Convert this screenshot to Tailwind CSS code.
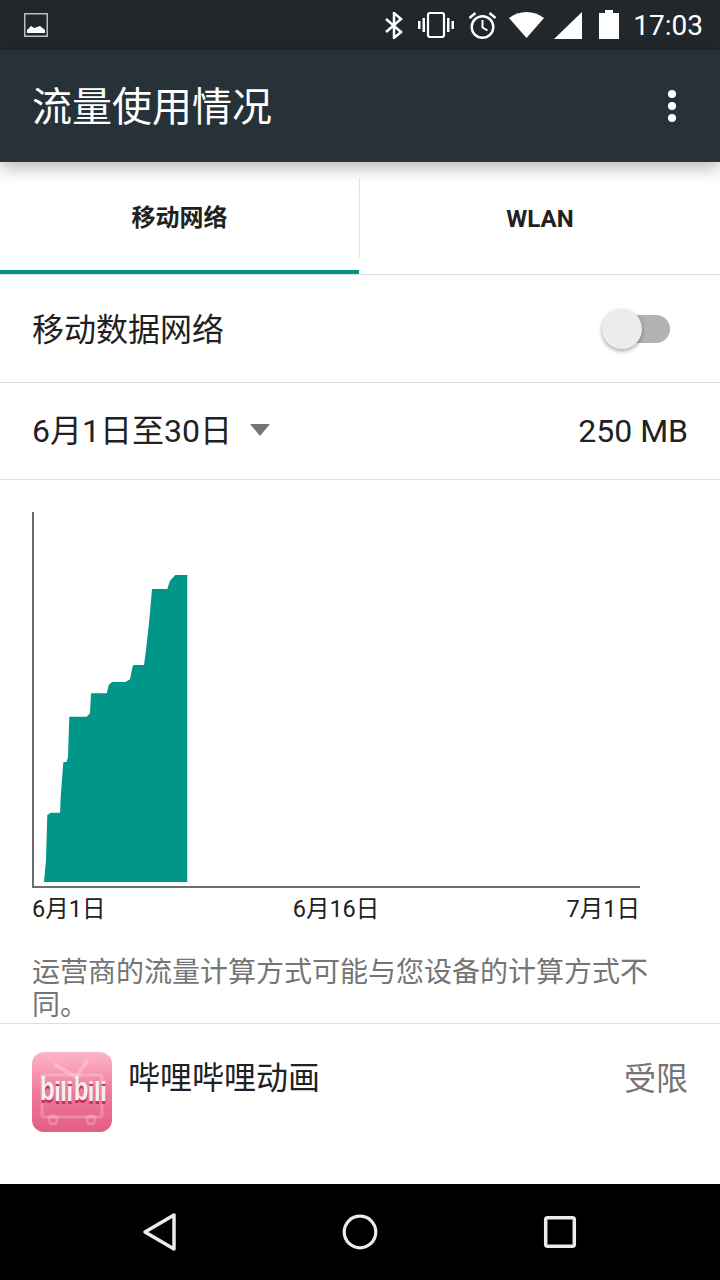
<!DOCTYPE html>
<html lang="zh-CN">
<head>
<meta charset="utf-8">
<script src="https://cdn.jsdelivr.net/npm/@tailwindcss/browser@4"></script>
</head>
<body class="m-0">
<div class="w-[720px] h-[1280px] flex flex-col bg-white overflow-hidden font-['Roboto','Noto_Sans_CJK_SC',sans-serif] text-[#212121]">
  <!-- status bar -->
  <div class="h-[50px] shrink-0 bg-[#21272b] flex items-center justify-between pl-6 pr-[17px] text-white">
    <svg width="24" height="24" viewBox="0 0 24 24" class="-mt-[1px]"><rect x="0.750" y="0.750" width="22.500" height="22.500" fill="none" stroke="#bdbdbd" stroke-width="1.500"/><path d="M3 20v-3l4-4 3 2 3-1 3-1 5 4v3z" fill="#fff"/></svg>
    <div class="flex items-center">
      <svg width="18" height="27" viewBox="0 0 18 27" class="mr-[15px]"><path d="M1 7l15 13-7 6V1l7 6L1 20" fill="none" stroke="#fff" stroke-width="2.500"/></svg>
      <svg width="36" height="26" viewBox="0 0 36 26" class="mr-[14px]"><rect x="10" y="1" width="16" height="24" rx="2" fill="none" stroke="#fff" stroke-width="2.200"/><path d="M0 9h2.500v8H0zM4.500 6H7v14H4.500zM29 6h2.500v14H29zM33.500 9H36v8h-2.500z" fill="#fff"/></svg>
      <svg width="29" height="28" viewBox="0 0 29 28" class="mr-[12px]"><circle cx="14.500" cy="16" r="10.800" fill="none" stroke="#fff" stroke-width="2.400"/><path d="M14.500 9v7.500l5 3" fill="none" stroke="#fff" stroke-width="2"/><path d="M1.500 7l6-5M27.500 7l-6-5" stroke="#fff" stroke-width="2.400"/></svg>
      <svg width="35" height="26" viewBox="0 0 35 26" class="mr-[10px]"><path d="M17.500 26L0 6C10 -2 25 -2 35 6z" fill="#fff"/></svg>
      <svg width="28" height="27" viewBox="0 0 28 27" class="mr-[17px]"><path d="M0 27L28 0v27z" fill="#fff"/></svg>
      <svg width="20" height="29" viewBox="0 0 20 29" class="mr-[14px] -mt-[2px]"><path d="M0 3h6V0h8v3h6v26H0z" fill="#fff"/></svg>
      <span class="text-[28px] leading-none text-white mt-[2px]">17:03</span>
    </div>
  </div>
  <!-- app bar -->
  <div class="h-[112px] shrink-0 bg-[#263238] flex items-center justify-between pl-[32px] pr-[44px] relative shadow-[0_6px_16px_rgba(0,0,0,0.28)]">
    <span class="text-[40px] leading-none text-white mt-[4px]">流量使用情况</span>
    <div class="flex flex-col gap-[4px]">
      <span class="block size-[8px] rounded-full bg-white"></span>
      <span class="block size-[8px] rounded-full bg-white"></span>
      <span class="block size-[8px] rounded-full bg-white"></span>
    </div>
  </div>
  <!-- tabs -->
  <div class="h-[113px] shrink-0 flex border-b border-[#dedede]">
    <div class="w-[359px] h-[112px] flex items-center justify-center border-b-4 border-[#009688] text-[24px] font-bold pt-[4px] shrink-0">移动网络</div>
    <div class="w-[1px] h-[80px] mt-[16px] bg-[#e5e5e5] shrink-0"></div>
    <div class="flex-1 flex items-center justify-center text-[24px] font-bold pt-[1px]">WLAN</div>
  </div>
  <!-- toggle row -->
  <div class="h-[108px] shrink-0 flex items-center justify-between pl-[32px] pr-[50px] border-b border-[#dedede]">
    <span class="text-[32px] leading-none mt-[2px]">移动数据网络</span>
    <div class="relative w-[68px] h-[28px]">
      <div class="absolute right-0 top-0 w-[56px] h-[28px] rounded-full bg-[#b2b2b2]"></div>
      <div class="absolute left-0 -top-[6px] size-[40px] rounded-full bg-[#ececec] shadow-[0_2px_4px_rgba(0,0,0,0.35)]"></div>
    </div>
  </div>
  <!-- cycle row -->
  <div class="h-[97px] shrink-0 flex items-center justify-between pl-[32px] pr-[32px] border-b border-[#dedede]">
    <div class="flex items-center">
      <span class="text-[32px] leading-none">6月1日至30日</span>
      <svg width="20" height="12" viewBox="0 0 20 12" class="ml-[18px] -mt-[2px]"><path d="M0 0h20L10 12z" fill="#757575"/></svg>
    </div>
    <span class="text-[32px] leading-none">250 MB</span>
  </div>
  <!-- chart -->
  <div class="h-[476px] shrink-0 pl-[32px] pt-[32px] flex flex-col">
    <div class="w-[608px] h-[376px] shrink-0 border-l-2 border-b-2 border-[#6c6e70] relative">
      <svg width="608" height="376" viewBox="32 512 608 376" class="absolute -left-[2px] top-0">
        <path d="M44 882 46 860 47.300 815 50.700 812.700H60L60.700 796.700 63.300 762.300 66.700 761.700 68 757 69.300 716.700H86.700L90 713.300 91 693.300H106.700L108.700 685 112 682H125.300L130 679.300 132.700 666 134 665H144L146 650 149.300 620 152 589H167.300L170 580.700 175.300 575H187.300V882Z" fill="#009688"/>
      </svg>
    </div>
    <div class="flex justify-between w-[608px] text-[23.500px] leading-none mt-[10px]">
      <span>6月1日</span><span>6月16日</span><span>7月1日</span>
    </div>
  </div>
  <!-- note -->
  <div class="h-[67px] shrink-0 pl-[32px] pr-[64px] text-[28px] leading-[33px] text-[#757575] overflow-hidden">运营商的流量计算方式可能与您设备的计算方式不同。</div>
  <!-- app row -->
  <div class="border-t border-[#dedede] flex-1 flex items-start justify-between pl-[32px] pr-[32px] pt-[28px]">
    <div class="flex items-start">
      <div class="w-[80px] h-[80px] rounded-[12px] bg-gradient-to-b from-[#fcb6c8] via-[#f0799b] to-[#e35e84] relative overflow-hidden">
        <svg width="80" height="80" viewBox="0 0 80 80" class="absolute inset-0"><g fill="none" stroke="#fff" stroke-opacity="0.22" stroke-width="3"><rect x="10" y="23" width="60" height="42" rx="2"/><circle cx="21" cy="68" r="4"/><circle cx="59" cy="68" r="4"/></g><path d="M22 12l22 13M56 8 44 25" stroke="#fff" stroke-opacity="0.25" stroke-width="4"/></svg>
        <div class="absolute left-[8px] top-[22px] h-[32px] flex items-end font-['Liberation_Sans',sans-serif] font-bold text-[#f1f1f3] leading-none tracking-[-0.5px] [text-shadow:0_2px_0_#c8325c]">
          <span class="inline-block text-[24px] scale-y-140 origin-bottom">b</span><span class="inline-block text-[24px] scale-y-115 origin-bottom">ili</span><span class="inline-block text-[24px] scale-y-140 origin-bottom ml-[1px]">b</span><span class="inline-block text-[24px] scale-y-115 origin-bottom">ili</span>
        </div>
      </div>
      <span class="ml-[16px] text-[32px] leading-none mt-[10px]">哔哩哔哩动画</span>
    </div>
    <span class="text-[32px] leading-none text-[#757575] mt-[11px]">受限</span>
  </div>
  <!-- nav -->
  <div class="h-[96px] shrink-0 bg-black flex items-center justify-between px-[140px]">
    <svg width="40" height="40" viewBox="0 0 40 40"><path d="M34 3v34L5 20z" fill="none" stroke="#ececec" stroke-width="3.500" stroke-linejoin="round"/></svg>
    <svg width="40" height="40" viewBox="0 0 40 40"><circle cx="20" cy="20" r="15.800" fill="none" stroke="#ececec" stroke-width="3.200"/></svg>
    <svg width="40" height="40" viewBox="0 0 40 40"><rect x="5.700" y="5.700" width="28.600" height="28.600" rx="2" fill="none" stroke="#ececec" stroke-width="3.500"/></svg>
  </div>
</div>
</body>
</html>
